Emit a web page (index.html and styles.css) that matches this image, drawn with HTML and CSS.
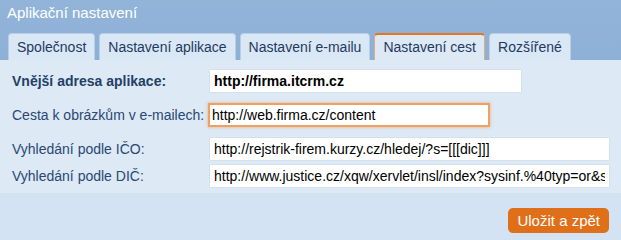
FILE: index.html
```html
<!DOCTYPE html>
<html lang="cs">
<head>
  <meta charset="UTF-8">
  <title>Aplikační nastavení</title>
  <link rel="stylesheet" href="styles.css">
</head>
<body>
  <div class="window">
    <div class="header">
      <h1>Aplikační nastavení</h1>
      <ul class="tabs">
        <li>Společnost</li>
        <li>Nastavení aplikace</li>
        <li>Nastavení e-mailu</li>
        <li class="active">Nastavení cest</li>
        <li>Rozšířené</li>
      </ul>
    </div>

    <div class="panel">
      <div class="row">
        <label class="strong">Vnější adresa aplikace:</label>
        <input type="text" class="w-short strong" value="http://firma.itcrm.cz">
      </div>
      <div class="row gap">
        <label>Cesta k obrázkům v e-mailech:</label>
        <input type="text" class="w-mid focus" value="http://web.firma.cz/content">
      </div>
      <div class="row gap-lg">
        <label>Vyhledání podle IČO:</label>
        <input type="text" class="w-long" value="http://rejstrik-firem.kurzy.cz/hledej/?s=[[[dic]]]">
      </div>
      <div class="row gap-sm">
        <label>Vyhledání podle DIČ:</label>
        <input type="text" class="w-long" value="http://www.justice.cz/xqw/xervlet/insl/index?sysinf.%40typ=or&amp;sysinf.%40strana=searchResults">
      </div>
    </div>

    <div class="footer">
      <button type="button">Uložit a zpět</button>
    </div>
  </div>
</body>
</html>
```

FILE: styles.css
```css
* {
  margin: 0;
  padding: 0;
  box-sizing: border-box;
}

body {
  font-family: "Liberation Sans", Arial, sans-serif;
  background-color: #d4e3f3;
}

.window {
  width: 621px;
  height: 240px;
}

.header {
  background: linear-gradient(#93b4d9, #8db0d6);
  padding-top: 4px;
}

.header h1 {
  font-size: 15px;
  font-weight: normal;
  color: #fff;
  padding-left: 7px;
  height: 29px;
  line-height: 18px;
}

.tabs {
  list-style: none;
  display: flex;
  gap: 4px;
  padding-left: 8px;
  height: 27px;
  align-items: flex-end;
}

.tabs li {
  height: 27px;
  padding: 0 8px;
  font-size: 14px;
  line-height: 27px;
  color: #1f3a62;
  background-color: #dae7f5;
  border: 1px solid #b9cfe8;
  border-bottom: none;
  border-radius: 4px 4px 0 0;
  white-space: nowrap;
}

.tabs li.active {
  border-top: 2px solid #e5761f;
  border-left-color: #e8a978;
  border-right-color: #e8a978;
  background-color: #dee9f6;
  line-height: 25px;
}

.panel {
  background-color: #dde9f5;
  padding: 10px 12px 6px 12px;
  height: 133px;
}

.row {
  display: flex;
  align-items: center;
}

.row.gap {
  margin-top: 11px;
}

.row.gap-lg {
  margin-top: 11px;
}

.row.gap-sm {
  margin-top: 5px;
}

.row label {
  width: 198px;
  font-size: 14px;
  color: #2a4872;
  white-space: nowrap;
}

.row label.strong {
  font-weight: bold;
  color: #233f68;
}

.row input {
  height: 22px;
  border: none;
  background-color: #fff;
  font-family: "Liberation Sans", Arial, sans-serif;
  font-size: 14px;
  color: #000;
  padding: 0 4px;
  box-shadow: 0 0 1px rgba(80, 110, 150, 0.4);
  outline: none;
}

.row input.strong {
  font-weight: bold;
}

.w-short {
  width: 311px;
}

.w-mid {
  width: 282px;
  margin-left: -2px;
}

.row input.focus {
  height: 24px;
  border: 2px solid #f0a060;
  box-shadow: 0 0 3px rgba(240, 150, 80, 0.7);
  padding: 0 2px;
}

.w-long {
  width: 399px;
}

.footer {
  display: flex;
  justify-content: flex-end;
  padding: 15px 12px 0 0;
}

.footer button {
  background-color: #e06f1a;
  color: #fff;
  border: none;
  border-radius: 5px;
  font-family: "Liberation Sans", Arial, sans-serif;
  font-size: 15px;
  padding: 0 9px;
  height: 25px;
  white-space: nowrap;
}
```
